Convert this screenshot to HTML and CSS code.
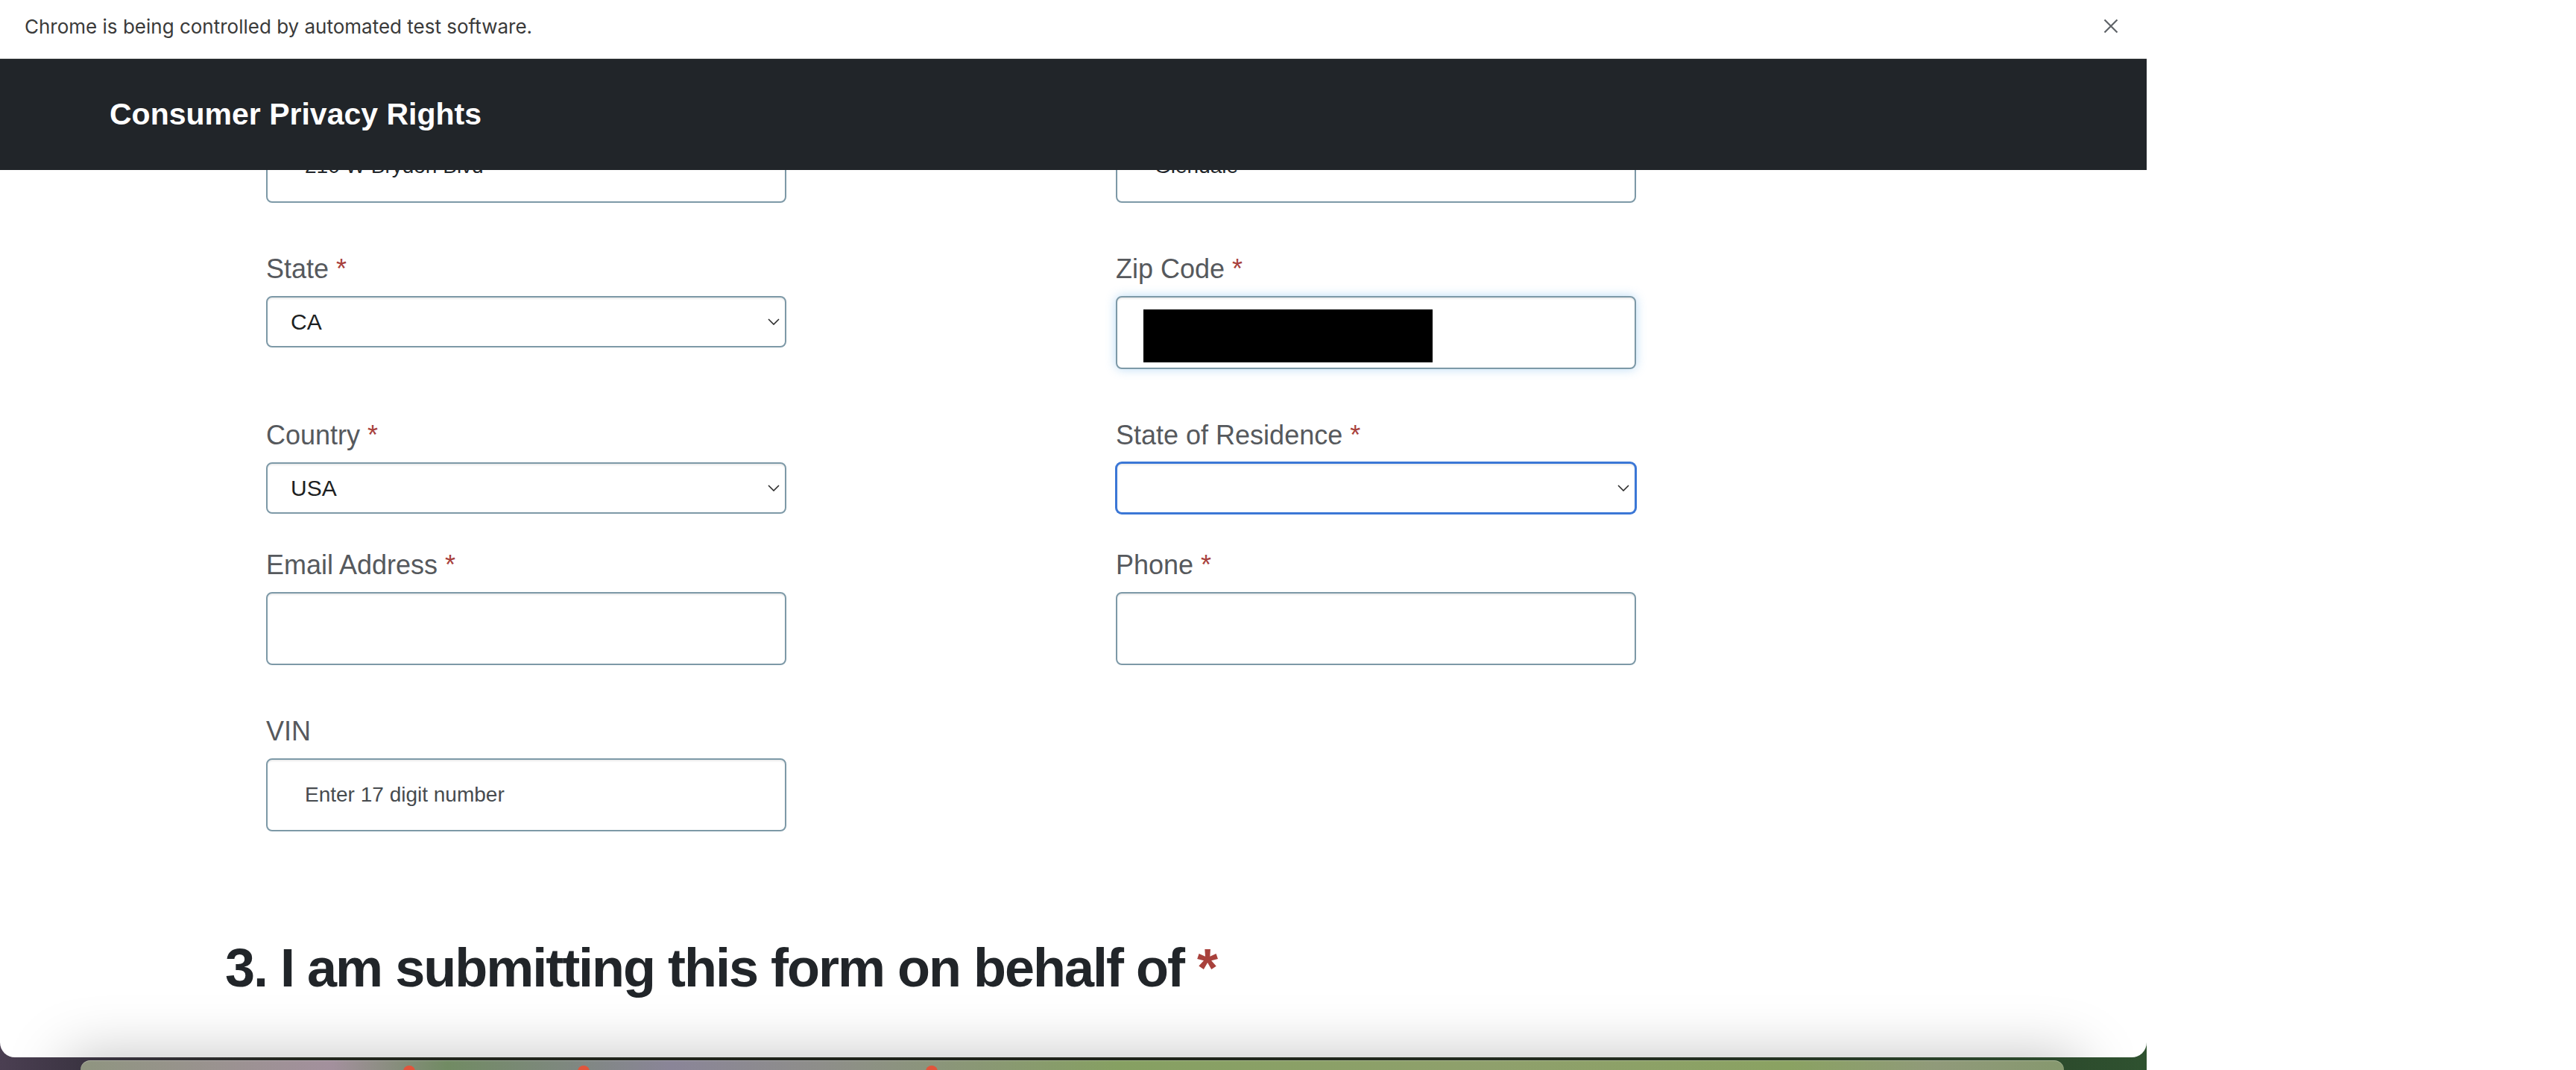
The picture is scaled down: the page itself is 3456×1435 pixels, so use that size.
FILE: index.html
```html
<!DOCTYPE html>
<html lang="en">
<head>
<meta charset="utf-8">
<title>Consumer Privacy Rights</title>
<link rel="stylesheet" href="styles.css">
</head>
<body>
<div class="screen">
  <div class="desk">
    <div class="window">
      <div class="infobar">
        <span class="infobar-text">Chrome is being controlled by automated test software.</span>
        <svg class="infobar-close" width="20" height="20" viewBox="0 0 20 20"><path d="M1.5 1.5 L18.5 18.5 M18.5 1.5 L1.5 18.5" stroke="#5f6368" stroke-width="2.2" fill="none"/></svg>
      </div>
      <div class="viewport">
        <header class="navbar"><span class="brand">Consumer Privacy Rights</span></header>
        <main class="page">
          <form class="form-grid">
            <div class="field field-input field-first">
              <input class="control" type="text" value="210 W Brydon Blvd" aria-label="Street Address">
            </div>
            <div class="field field-input field-first">
              <input class="control" type="text" value="Glendale" aria-label="City">
            </div>

            <div class="field field-select">
              <label class="label">State <span class="req">*</span></label>
              <div class="select"><span>CA</span><svg class="chev" viewBox="0 0 16 9"><path d="M1 1 L8 8 L15 1" stroke="#2b2b2b" stroke-width="1.6" fill="none"/></svg></div>
            </div>
            <div class="field field-input">
              <label class="label">Zip Code <span class="req">*</span></label>
              <div class="control zip"><span class="redact"></span></div>
            </div>

            <div class="field field-select">
              <label class="label">Country <span class="req">*</span></label>
              <div class="select"><span>USA</span><svg class="chev" viewBox="0 0 16 9"><path d="M1 1 L8 8 L15 1" stroke="#2b2b2b" stroke-width="1.6" fill="none"/></svg></div>
            </div>
            <div class="field field-select">
              <label class="label">State of Residence <span class="req">*</span></label>
              <div class="select select-focus"><span></span><svg class="chev" viewBox="0 0 16 9"><path d="M1 1 L8 8 L15 1" stroke="#2b2b2b" stroke-width="1.6" fill="none"/></svg></div>
            </div>

            <div class="field field-input">
              <label class="label">Email Address <span class="req">*</span></label>
              <input class="control" type="text">
            </div>
            <div class="field field-input">
              <label class="label">Phone <span class="req">*</span></label>
              <input class="control" type="text">
            </div>

            <div class="field field-input">
              <label class="label">VIN</label>
              <input class="control" type="text" placeholder="Enter 17 digit number">
            </div>
          </form>
          <h3 class="section-title">3. I am submitting this form on behalf of <span class="req">*</span></h3>
        </main>
        <div class="dock-shadow"></div>
      </div>
    </div>
    <div class="wall">
      <div class="other-window">
        <span class="dot dot-1"></span>
        <span class="dot dot-2"></span>
        <span class="dot dot-3"></span>
      </div>
    </div>
  </div>
</div>
</body>
</html>
```

FILE: styles.css
```css
* { box-sizing: border-box; }
html, body { margin: 0; padding: 0; }
body {
  width: 3456px;
  height: 1435px;
  overflow: hidden;
  background: #fff;
  font-family: "Liberation Sans", Arial, sans-serif;
}
.screen { display: flex; height: 1435px; }
.desk {
  width: 2880px;
  height: 1435px;
  display: flex;
  flex-direction: column;
  background: linear-gradient(to right, #4b3f52 0px, #3b3442 110px, #22261d 400px, #1e2219 1400px, #232e20 2300px, #2c4a2c 2750px, #2f5230 2880px);
}
.window {
  height: 1418px;
  flex: none;
  background: #fff;
  border-radius: 0 0 20px 20px;
  overflow: hidden;
  display: flex;
  flex-direction: column;
}
.infobar {
  height: 79px;
  flex: none;
  border-bottom: 1px solid #d6d6d6;
  display: flex;
  align-items: center;
  justify-content: space-between;
  padding: 0 38px 8px 33px;
}
.infobar-text {
  font-family: Inter, "Liberation Sans", sans-serif;
  font-size: 26px;
  color: #3a3a3a;
}
.infobar-close { display: block; }
.viewport {
  position: relative;
  flex: 1;
  overflow: hidden;
}
.navbar {
  position: absolute;
  top: 0;
  left: 0;
  right: 0;
  height: 149px;
  background: #212529;
  display: flex;
  align-items: center;
  padding-left: 147px;
  z-index: 2;
}
.brand {
  color: #fff;
  font-weight: 700;
  font-size: 41px;
}
.page { padding: 37px 0 0 302px; }
.form-grid {
  margin: 0 0 0 55px;
  display: grid;
  grid-template-columns: 698px 698px;
  column-gap: 442px;
  align-items: start;
}
.field-first { padding-top: 58px; }
.label {
  display: block;
  font-size: 36px;
  line-height: 43px;
  color: #56595d;
  margin-bottom: 15px;
}
.req { color: #a8413c; }
.control {
  display: block;
  width: 100%;
  height: 98px;
  border: 2px solid #7d99a7;
  border-radius: 8px;
  background: #fff;
  box-shadow: inset 0 2px 2px rgba(0, 0, 0, 0.075);
  padding: 0 20px 0 50px;
  font-family: "Liberation Sans", Arial, sans-serif;
  font-size: 28px;
  color: #212529;
  outline: none;
  margin: 0;
}
.control::placeholder { color: #474b4f; opacity: 1; }
.field-input { margin-bottom: 67px; }
.field-select { margin-bottom: 47px; }
.select {
  display: flex;
  align-items: center;
  justify-content: space-between;
  height: 69px;
  border: 2px solid #7d99a7;
  border-radius: 8px;
  background: #fff;
  box-shadow: inset 0 2px 2px rgba(0, 0, 0, 0.075);
  padding: 0 7px 0 31px;
  font-size: 30px;
  color: #1d1f22;
}
.select-focus {
  border-color: #3b77d6;
  box-shadow: 0 0 0 1px #3b77d6, inset 0 2px 2px rgba(0, 0, 0, 0.075);
}
.chev { width: 16px; height: 9px; display: block; }
.zip {
  display: flex;
  align-items: flex-start;
  padding: 16px 0 0 35px;
  box-shadow: inset 0 2px 2px rgba(0, 0, 0, 0.075), 0 0 14px rgba(102, 175, 233, 0.45);
}
.redact {
  display: block;
  width: 388px;
  height: 71px;
  background: #000;
}
.section-title {
  margin: 73px 0 0;
  font-size: 72px;
  line-height: 86px;
  font-weight: 700;
  letter-spacing: -2px;
  color: #212529;
}
.dock-shadow {
  position: absolute;
  left: 90px;
  right: 90px;
  top: 100%;
  height: 120px;
  box-shadow: 0 0 80px rgba(0, 0, 0, 0.25);
}
.wall {
  flex: 1;
  display: flex;
  padding: 4px 111px 0 108px;
}
.other-window {
  position: relative;
  flex: 1;
  border-radius: 22px 22px 0 0;
  overflow: hidden;
  background: linear-gradient(to right, #8f9580 0%, #a3909d 12.7%, #718b63 18.5%, #8a8598 29.8%, #8e8e8a 37.3%, #86a062 52.3%, #8fa06c 71.1%, #8aa262 86.1%, #909a7a 93.6%, #86986e 100%);
  box-shadow: inset 0 1px 0 rgba(255, 255, 255, 0.25);
}
.dot {
  position: absolute;
  top: 7px;
  width: 16px;
  height: 16px;
  border-radius: 50%;
  background: #e2553c;
}
.dot-1 { left: 433px; }
.dot-2 { left: 667px; }
.dot-3 { left: 1134px; }
```
